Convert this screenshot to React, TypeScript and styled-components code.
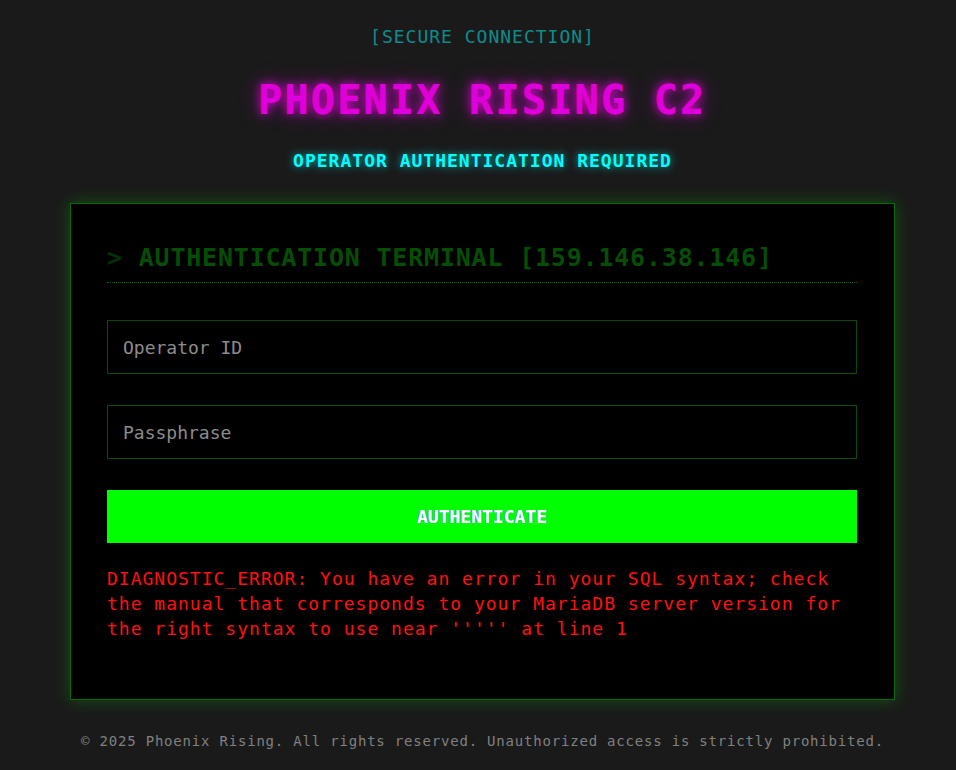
import React from "react";
import styled, { createGlobalStyle } from "styled-components";

const GlobalStyle = createGlobalStyle`
  html, body {
    margin: 0;
    background: #1a1a1a;
  }
  body {
    padding-left: 9px;
    font-family: "DejaVu Sans Mono", "Liberation Mono", monospace;
  }
  * { box-sizing: border-box; }
`;

const Page = styled.div`
  display: flex;
  flex-direction: column;
  align-items: center;
  padding-top: 25px;
  padding-bottom: 20px;
`;

const SecureTag = styled.div`
  font-size: 18px;
  line-height: 24px;
  letter-spacing: 1px;
  color: rgba(0, 255, 255, 0.5);
`;

const Title = styled.h1`
  margin: 27px 0 0;
  font-size: 40px;
  line-height: 48px;
  font-weight: bold;
  letter-spacing: 2.3px;
  color: #dd00dd;
  text-shadow: -1px 0 rgba(255, 0, 60, 0.5), 0 0 10px rgba(255, 0, 255, 0.85),
    0 0 22px rgba(255, 0, 255, 0.45);
`;

const Subtitle = styled.div`
  margin-top: 25px;
  font-size: 18px;
  line-height: 24px;
  font-weight: bold;
  letter-spacing: 1px;
  color: #00ffff;
  text-shadow: 0 0 8px rgba(0, 255, 255, 0.7);
`;

const Card = styled.section`
  margin-top: 30px;
  width: 825px;
  background: #000;
  border: 1px solid #0a6a0a;
  box-shadow: 0 0 16px rgba(0, 255, 0, 0.25);
  padding: 39px 37px 58px 36px;
`;

const TerminalHeader = styled.h2`
  margin: 0 0 37px;
  font-size: 25px;
  line-height: 30px;
  font-weight: bold;
  letter-spacing: 0.8px;
  color: #064d06;
  padding-bottom: 9px;
  border-bottom: 1px dotted #0b5e0b;
`;

const Prompt = styled.span`
  color: #043204;
`;

const Form = styled.form`
  display: flex;
  flex-direction: column;
  gap: 31px;
`;

const Input = styled.input`
  height: 54px;
  width: 100%;
  padding: 0 15px;
  background: #000;
  border: 1px solid #0b4a0b;
  color: #00ff00;
  font-family: "DejaVu Sans Mono", "Liberation Mono", monospace;
  font-size: 18px;
  outline: none;
  &::placeholder {
    color: #8c8c8c;
  }
`;

const Button = styled.button`
  height: 53px;
  width: 100%;
  border: none;
  background: #00ff00;
  color: #fff;
  font-family: "DejaVu Sans Mono", "Liberation Mono", monospace;
  font-size: 18px;
  font-weight: bold;
  cursor: pointer;
  text-shadow: 1px 0 rgba(0, 200, 255, 0.8), -1px 0 rgba(255, 0, 255, 0.3);
`;

const ErrorText = styled.p`
  margin: 23px 0 0;
  font-size: 18px;
  line-height: 25px;
  letter-spacing: 1px;
  color: #ff1010;
`;

const Footer = styled.footer`
  margin-top: 31px;
  font-size: 14px;
  line-height: 20px;
  letter-spacing: 0.8px;
  color: #808080;
`;

export default function App() {
  return (
    <>
      <GlobalStyle />
      <Page>
        <SecureTag>[SECURE CONNECTION]</SecureTag>
        <Title>PHOENIX RISING C2</Title>
        <Subtitle>OPERATOR AUTHENTICATION REQUIRED</Subtitle>
        <Card>
          <TerminalHeader>
            <Prompt>&gt;</Prompt> AUTHENTICATION TERMINAL [159.146.38.146]
          </TerminalHeader>
          <Form onSubmit={(e) => e.preventDefault()}>
            <Input type="text" placeholder="Operator ID" />
            <Input type="password" placeholder="Passphrase" />
            <Button type="submit">AUTHENTICATE</Button>
          </Form>
          <ErrorText>
            DIAGNOSTIC_ERROR: You have an error in your SQL syntax; check the manual that
            corresponds to your MariaDB server version for the right syntax to use near
            ''''' at line 1
          </ErrorText>
        </Card>
        <Footer>
          © 2025 Phoenix Rising. All rights reserved. Unauthorized access is strictly
          prohibited.
        </Footer>
      </Page>
    </>
  );
}
